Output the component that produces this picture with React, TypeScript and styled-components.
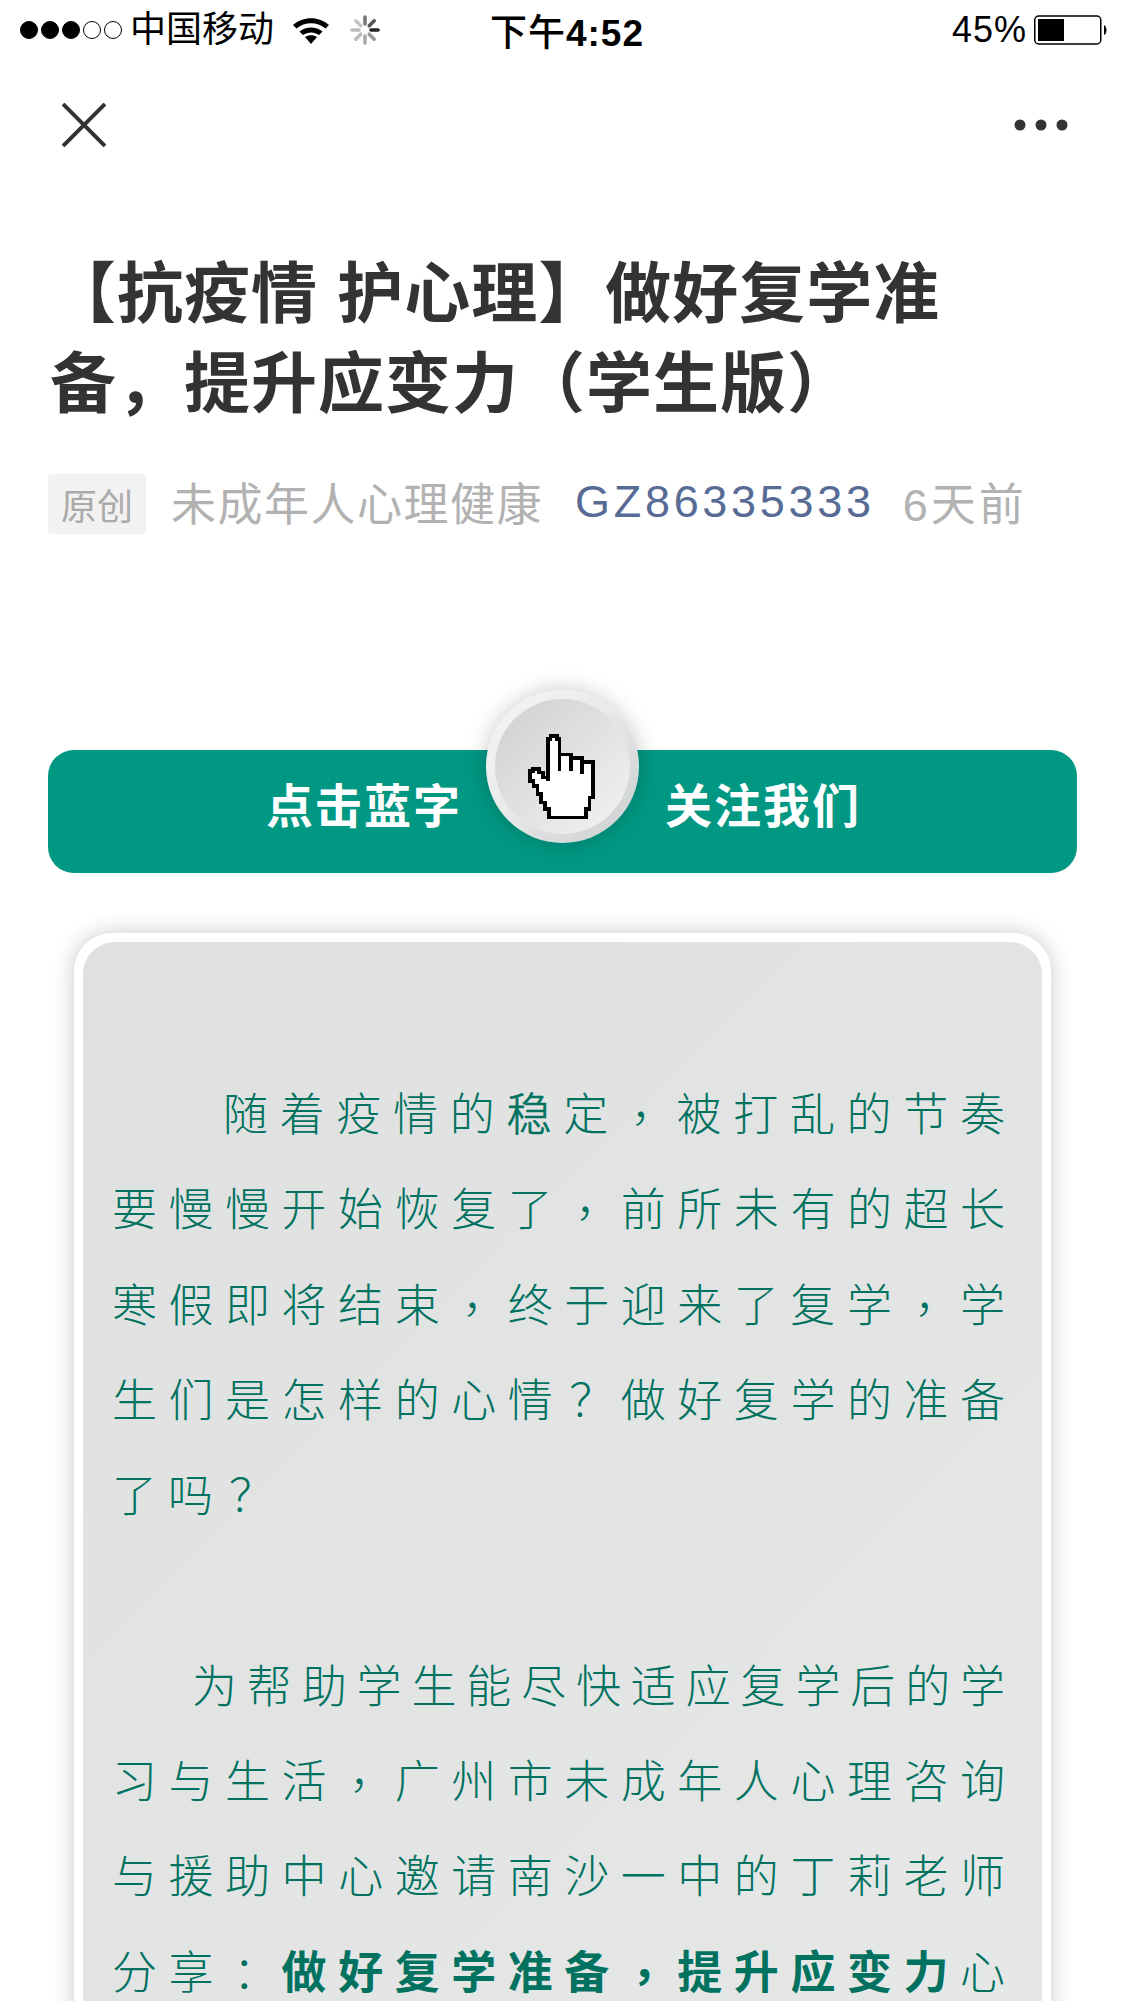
import React from 'react';
import styled, { createGlobalStyle } from 'styled-components';

const cjk = `'Liberation Sans', 'Noto Sans CJK SC', sans-serif`;

const GlobalStyle = createGlobalStyle`
  html, body {
    margin: 0;
    padding: 0;
    background: #fff;
  }
  body {
    font-family: ${cjk};
  }
`;

const Page = styled.div`
  width: 1125px;
  height: 2001px;
  overflow: hidden;
  background: #fff;
`;

const StatusBar = styled.div`
  height: 60px;
  padding: 0 17px 0 20px;
  display: grid;
  grid-template-columns: 1fr auto 1fr;
  align-items: center;
  color: #000;
  font-size: 36px;
`;

const StatusLeft = styled.div`
  display: flex;
  align-items: center;
`;

const StatusRight = styled.div`
  display: flex;
  align-items: center;
  justify-content: flex-end;
`;

const Signal = styled.span<{ $on?: boolean }>`
  width: 18px;
  height: 18px;
  margin-right: 3px;
  box-sizing: border-box;
  border-radius: 50%;
  border: 1.5px solid #000;
  background: ${(p) => (p.$on ? '#000' : 'transparent')};
`;

const Carrier = styled.span`
  margin-left: 5px;
  margin-right: 18px;
  line-height: 40px;
`;

const Clock = styled.span`
  font-weight: 500;
  font-size: 37px;
  letter-spacing: 1px;
  margin-left: 6px;

  b {
    font-weight: 700;
  }
`;

const Percent = styled.span`
  margin-right: 7px;
  letter-spacing: 1px;
`;

const NavBar = styled.div`
  height: 72px;
  padding: 29px 57px 0 62px;
  display: flex;
  justify-content: space-between;
  align-items: center;
`;

const Article = styled.div`
  padding: 0 48px;
`;

const Title = styled.h1`
  margin: 88px 0 0;
  padding: 0 0 0 2px;
  width: 930px;
  font-size: 66px;
  line-height: 90px;
  font-weight: 700;
  letter-spacing: 1px;
  color: #333;
`;

const Meta = styled.div`
  margin-top: 45px;
  height: 60px;
  display: flex;
  align-items: center;
  font-size: 45px;
`;

const OriginalTag = styled.span`
  width: 98px;
  height: 60px;
  box-sizing: border-box;
  display: flex;
  align-items: center;
  justify-content: center;
  border-radius: 4px;
  background: #f2f2f2;
  color: #aaa;
  font-size: 36px;
`;

const MetaText = styled.span<{ $link?: boolean; $gap: number; $spacing: number }>`
  margin-left: ${(p) => p.$gap}px;
  margin-bottom: 5px;
  letter-spacing: ${(p) => p.$spacing}px;
  color: ${(p) => (p.$link ? '#576b95' : '#b2b2b2')};
`;

const Banner = styled.div`
  position: relative;
  margin-top: 216px;
  height: 123px;
  box-sizing: border-box;
  padding-bottom: 18px;
  border-radius: 26px;
  background: #009883;
  display: flex;
  align-items: center;
  justify-content: center;
  gap: 205px;
  color: #fff;
  font-size: 47px;
  font-weight: 700;
  letter-spacing: 2px;
`;

const BannerLabel = styled.span`
  margin-right: -2px;
`;

const HandRing = styled.div`
  position: absolute;
  left: 50%;
  top: -60px;
  width: 153px;
  height: 153px;
  margin-left: -76.5px;
  border-radius: 50%;
  background: linear-gradient(135deg, #f4f5f5 0%, #e9eaea 45%, #c9cccd 100%);
  box-shadow: 0 0 22px rgba(0, 0, 0, 0.22);
  display: flex;
  align-items: center;
  justify-content: center;
`;

const HandFace = styled.div`
  width: 135px;
  height: 135px;
  border-radius: 50%;
  background: linear-gradient(135deg, #cdcfd0 0%, #e0e1e2 50%, #f2f3f3 100%);
  display: flex;
  align-items: center;
  justify-content: center;
`;

const CardFrame = styled.div`
  margin: 60px 26px 0;
  padding: 9px;
  border-radius: 38px;
  background: #fff;
  box-shadow: 0 0 22px rgba(0, 0, 0, 0.22);
`;

const CardBody = styled.div`
  min-height: 1200px;
  padding: 126px 26px 0 29px;
  border-radius: 32px;
  background: linear-gradient(135deg, #dfe0e0 0%, #e2e3e3 40%, #e7e9e9 100%);
  color: #00725f;
  font-size: 45px;
  font-weight: 300;
`;

const TextLine = styled.div<{ $indent?: number; $last?: boolean; $tight?: boolean }>`
  height: 95.3px;
  line-height: 95.3px;
  padding-left: ${(p) => p.$indent ?? 0}px;
  padding-right: ${(p) => (p.$tight ? 2 : 0)}px;
  letter-spacing: ${(p) => (p.$tight ? 9 : 11)}px;
  text-align: justify;
  text-align-last: ${(p) => (p.$last ? 'left' : 'justify')};
  white-space: nowrap;

  b {
    font-weight: 700;
  }
`;

const Heavy = styled.span`
  -webkit-text-stroke: 0.7px #00725f;
`;

// 全角标点在参考图里更靠中间，宽度不变
const Punct = styled.span<{ $dx?: number; $dy?: number }>`
  display: inline-block;
  padding-left: ${(p) => p.$dx ?? 11}px;
  letter-spacing: ${(p) => 11 - (p.$dx ?? 11)}px;
  transform: translateY(${(p) => p.$dy ?? -9}px);
`;

const BlankLine = styled.div`
  height: 95.3px;
`;

function SignalDots() {
  return (
    <>
      <Signal $on />
      <Signal $on />
      <Signal $on />
      <Signal />
      <Signal />
    </>
  );
}

function WifiIcon() {
  return (
    <svg width="38" height="28" viewBox="0 0 38 28">
      <path d="M1 9 C11 0 27 0 37 9 L33.5 12.6 C25 5.6 13 5.6 4.5 12.6 Z" fill="#000" />
      <path d="M7.5 15.5 C14 10 24 10 30.5 15.5 L27 19 C22 15.5 16 15.5 11 19 Z" fill="#000" />
      <path d="M13 21 C16.5 18.6 21.5 18.6 25 21 L19 28 Z" fill="#000" />
    </svg>
  );
}

function Spinner() {
  const ticks = [0, 45, 90, 135, 180, 225, 270, 315];
  const shades = ['#777', '#555', '#222', '#999', '#aaa', '#bbb', '#bbb', '#c4c4c4'];
  return (
    <svg width="32" height="32" viewBox="-16 -16 32 32" style={{ marginLeft: 19 }}>
      {ticks.map((deg, i) => (
        <line
          key={deg}
          x1="0"
          y1="-6"
          x2="0"
          y2="-13"
          stroke={shades[i]}
          strokeWidth="3.6"
          strokeLinecap="round"
          transform={`rotate(${deg})`}
        />
      ))}
    </svg>
  );
}

function BatteryIcon() {
  return (
    <svg width="74" height="30" viewBox="0 0 74 30">
      <rect x="0.75" y="1" width="66" height="28" rx="4" fill="none" stroke="#000" strokeWidth="1.5" />
      <rect x="4" y="4" width="26" height="22" fill="#000" />
      <path d="M70 10 C73 11 73.5 19 70 20 Z" fill="#000" />
    </svg>
  );
}

function CloseIcon() {
  return (
    <svg width="44" height="44" viewBox="0 0 44 44">
      <path d="M1 1 L43 43 M43 1 L1 43" stroke="#333" strokeWidth="4" fill="none" />
    </svg>
  );
}

function MoreIcon() {
  return (
    <svg width="54" height="12" viewBox="0 0 54 12">
      <circle cx="6" cy="6" r="5.5" fill="#333" />
      <circle cx="27" cy="6" r="5.5" fill="#333" />
      <circle cx="48" cy="6" r="5.5" fill="#333" />
    </svg>
  );
}

function HandIcon() {
  return (
    <svg
      width="70"
      height="90"
      viewBox="25 22 210 264"
      shapeRendering="crispEdges"
      style={{ marginLeft: -1, marginTop: 20, flex: 'none' }}
    >
      <path
        d="M87 165 V40 H95 V30 H115 V40 H122 V86 H156 V97 H190 V108 H223 V215 H212 V250 H201 V275 H90 V250 H78 V230 H67 V205 H56 V180 H44 V165 H33 V135 H43 V130 H60 V140 H72 V155 H87 Z"
        fill="#fff"
        stroke="#000"
        strokeWidth="11"
      />
      <path d="M122 86 V135 M156 97 V135 M190 108 V145" stroke="#000" strokeWidth="11" fill="none" />
    </svg>
  );
}

export default function App() {
  return (
    <Page>
      <GlobalStyle />
      <StatusBar>
        <StatusLeft>
          <SignalDots />
          <Carrier>中国移动</Carrier>
          <WifiIcon />
          <Spinner />
        </StatusLeft>
        <Clock>
          下午<b>4:52</b>
        </Clock>
        <StatusRight>
          <Percent>45%</Percent>
          <BatteryIcon />
        </StatusRight>
      </StatusBar>
      <NavBar>
        <CloseIcon />
        <MoreIcon />
      </NavBar>
      <Article>
        <Title>【抗疫情 护心理】做好复学准备，提升应变力（学生版）</Title>
        <Meta>
          <OriginalTag>原创</OriginalTag>
          <MetaText $gap={25} $spacing={1.5}>未成年人心理健康</MetaText>
          <MetaText $gap={32} $spacing={3.7} $link>GZ86335333</MetaText>
          <MetaText $gap={28} $spacing={3}>6天前</MetaText>
        </Meta>
        <Banner>
          <BannerLabel>点击蓝字</BannerLabel>
          <BannerLabel>关注我们</BannerLabel>
          <HandRing>
            <HandFace>
              <HandIcon />
            </HandFace>
          </HandRing>
        </Banner>
        <CardFrame>
          <CardBody>
            <TextLine $indent={111}>
              随着疫情的<Heavy>稳</Heavy>定<Punct>，</Punct>被打乱的节奏
            </TextLine>
            <TextLine>
              要慢慢开始恢复了<Punct>，</Punct>前所未有的超长
            </TextLine>
            <TextLine>
              寒假即将结束<Punct>，</Punct>终于迎来了复学<Punct>，</Punct>学
            </TextLine>
            <TextLine>
              生们是怎样的心情<Punct $dx={5} $dy={0}>？</Punct>做好复学的准备
            </TextLine>
            <TextLine $last>
              了吗<Punct $dx={5} $dy={0}>？</Punct>
            </TextLine>
            <BlankLine />
            <TextLine $indent={80} $tight>为帮助学生能尽快适应复学后的学</TextLine>
            <TextLine>
              习与生活<Punct>，</Punct>广州市未成年人心理咨询
            </TextLine>
            <TextLine>与援助中心邀请南沙一中的丁莉老师</TextLine>
            <TextLine>
              分享<Punct $dx={8} $dy={0}>：</Punct>
              <b>
                做好复学准备<Punct>，</Punct>提升应变力
              </b>
              心
            </TextLine>
          </CardBody>
        </CardFrame>
      </Article>
    </Page>
  );
}
